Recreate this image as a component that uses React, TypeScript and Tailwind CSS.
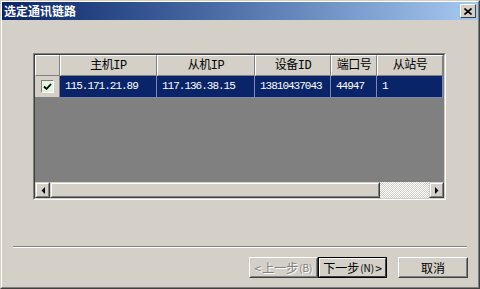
import React from "react";

const mono = { fontFamily: '"Liberation Mono", "Noto Sans CJK SC", monospace' };
const cjk = { fontFamily: '"Noto Sans CJK SC", "Liberation Sans", sans-serif' };

const cols = [
  { label: "主机IP", w: "w-[97px]", v: "115.171.21.89" },
  { label: "从机IP", w: "w-[98px]", v: "117.136.38.15" },
  { label: "设备ID", w: "w-[76px]", v: "13810437043" },
  { label: "端口号", w: "w-[46px]", v: "44947" },
  { label: "从站号", w: "w-[66px]", v: "1" },
];

function Arrow({ dir }: { dir: "l" | "r" }) {
  return (
    <svg width="4" height="7" viewBox="0 0 4 7">
      {dir === "l" ? <polygon points="4,0 4,7 0.5,3.5" fill="#000" /> : <polygon points="0,0 0,7 3.5,3.5" fill="#000" />}
    </svg>
  );
}

export default function App() {
  return (
    <div className="w-[480px] h-[289px] bg-[#d4d0c8] border border-t-[#d4d0c8] border-l-[#d4d0c8] border-r-[#404040] border-b-[#404040] overflow-hidden">
      <div className="w-full h-full border border-t-white border-l-white border-r-[#808080] border-b-[#808080] flex flex-col">
        {/* title bar */}
        <div className="h-[18px] flex items-center justify-between bg-gradient-to-r from-[#0a246a] to-[#a6caf0] pl-[2px] pr-[2px]">
          <span className="text-white font-bold text-[12px] leading-none" style={cjk}>选定通讯链路</span>
          <div className="w-[16px] h-[14px] bg-[#d4d0c8] border border-t-white border-l-white border-r-[#404040] border-b-[#404040] flex items-center justify-center">
            <svg width="8" height="7" viewBox="0 0 8 7">
              <path d="M0.5 0.5 L7.5 6.5 M7.5 0.5 L0.5 6.5" stroke="#000" strokeWidth="1.6" />
            </svg>
          </div>
        </div>

        {/* table */}
        <div className="ml-[31px] mt-[33px] w-[413px] h-[147px] border border-t-[#808080] border-l-[#808080] border-r-white border-b-white">
          <div className="w-full h-full border border-t-[#404040] border-l-[#404040] border-r-[#d4d0c8] border-b-[#d4d0c8] bg-[#808080] flex flex-col">
            {/* header */}
            <div className="flex h-[21px] bg-[#d4d0c8]">
              <div className="w-[25px] h-full border border-t-white border-l-white border-r-[#808080] border-b-[#808080]" />
              {cols.map((c) => (
                <div
                  key={c.label}
                  className={`${c.w} h-full border border-t-white border-l-white border-r-[#808080] border-b-[#808080] flex items-center justify-center text-[12px] text-black tracking-[-0.5px]`}
                  style={mono}
                >
                  {c.label}
                </div>
              ))}
              <div className="flex-1 bg-[#808080]" />
            </div>
            {/* data row */}
            <div className="flex h-[22px]">
              <div className="w-[25px] h-full bg-[#d4d0c8] border-r border-b border-[#808080] flex items-center justify-center">
                <div className="w-[13px] h-[13px] border border-t-[#808080] border-l-[#808080] border-r-white border-b-white bg-[#e4f4e0] flex items-center justify-center">
                  <svg width="9" height="8" viewBox="0 0 9 8">
                    <path d="M1 3.5 L3.5 6 L8 1" stroke="#000" strokeWidth="1.8" fill="none" />
                  </svg>
                </div>
              </div>
              {cols.map((c) => (
                <div
                  key={c.label}
                  className={`${c.w} h-full bg-[#0a246a] border-r border-b border-[#8088b0] flex items-center pl-[5px] text-white text-[11px] tracking-[-1px]`}
                  style={mono}
                >
                  {c.v}
                </div>
              ))}
            </div>
            <div className="flex-1" />
            {/* scrollbar */}
            <div className="h-[16px] flex">
              <div className="w-[15px] h-full bg-[#d4d0c8] border border-t-[#d4d0c8] border-l-[#d4d0c8] border-r-[#404040] border-b-[#404040]">
                <div className="w-full h-full border border-t-white border-l-white border-r-[#808080] border-b-[#808080] flex items-center justify-center">
                  <Arrow dir="l" />
                </div>
              </div>
              <div className="w-[330px] h-full bg-[#d4d0c8] border border-t-[#d4d0c8] border-l-[#d4d0c8] border-r-[#404040] border-b-[#404040]">
                <div className="w-full h-full border border-t-white border-l-white border-r-[#808080] border-b-[#808080]" />
              </div>
              <div
                className="flex-1 h-full"
                style={{ backgroundColor: "#ece9e2", backgroundImage: "repeating-conic-gradient(#d4d0c8 0% 25%, #ffffff 0% 50%)", backgroundSize: "2px 2px" }}
              />
              <div className="w-[15px] h-full bg-[#d4d0c8] border border-t-[#d4d0c8] border-l-[#d4d0c8] border-r-[#404040] border-b-[#404040]">
                <div className="w-full h-full border border-t-white border-l-white border-r-[#808080] border-b-[#808080] flex items-center justify-center">
                  <Arrow dir="r" />
                </div>
              </div>
            </div>
          </div>
        </div>

        {/* separator */}
        <div className="ml-[11px] mt-[46px] w-[454px] h-[2px] border-t border-[#808080] border-b border-b-white" />

        {/* buttons */}
        <div className="flex mt-[9px] ml-[247px] text-[12px]" style={cjk}>
          <div className="w-[69px] h-[21px] border border-t-white border-l-white border-r-[#404040] border-b-[#404040]">
            <div className="w-full h-full border border-t-[#d4d0c8] border-l-[#d4d0c8] border-r-[#808080] border-b-[#808080] flex items-center justify-center gap-[1px] text-[#808080] [text-shadow:1px_1px_0_#fff] whitespace-nowrap">
              <span>&lt;</span><span>上一步</span><span className="text-[10px]">(B)</span>
            </div>
          </div>
          <div className="w-[69px] h-[21px] border border-black">
            <div className="w-full h-full border border-t-white border-l-white border-r-[#404040] border-b-[#404040] flex items-center justify-center gap-[1px] text-black whitespace-nowrap">
              <span>下一步</span><span className="text-[10px]">(N)</span><span>&gt;</span>
            </div>
          </div>
          <div className="ml-[11px] w-[70px] h-[21px] border border-t-white border-l-white border-r-[#404040] border-b-[#404040]">
            <div className="w-full h-full border border-t-[#d4d0c8] border-l-[#d4d0c8] border-r-[#808080] border-b-[#808080] flex items-center justify-center text-black">
              取消
            </div>
          </div>
        </div>
      </div>
    </div>
  );
}
